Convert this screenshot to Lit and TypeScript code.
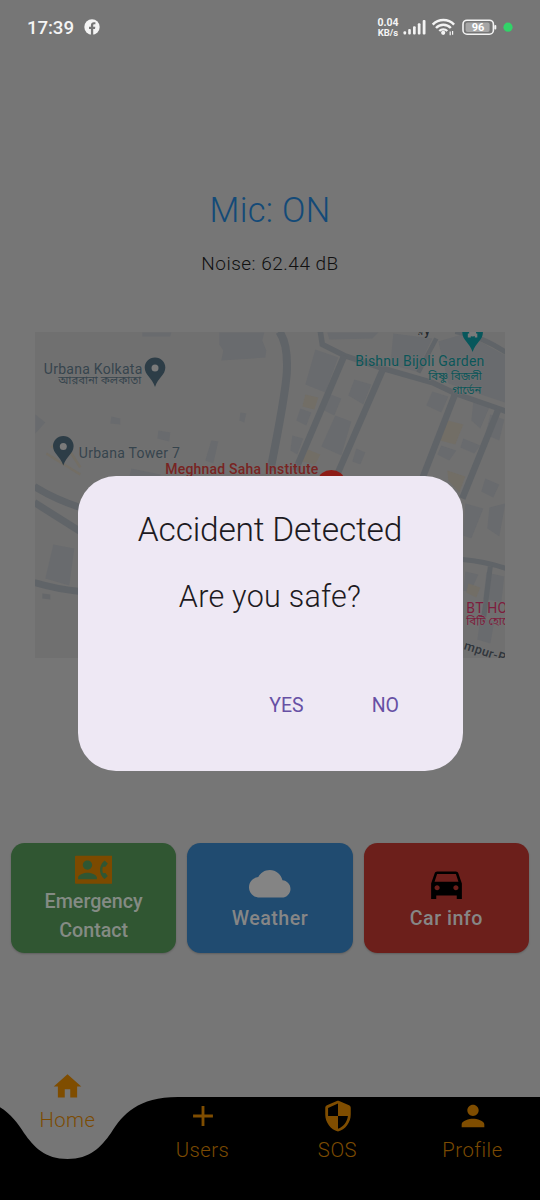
import { LitElement, html, css, svg } from "lit";
import { customElement } from "lit/decorators.js";

const ICONS: Record<string, string> = {
  contact:
    "M24 3.4Q24 3 23.5 3H.5Q0 3 0 3.5v17q0 .5.5.5h23q.5 0 .5-.5zM8 6c1.66 0 3 1.34 3 3s-1.34 3-3 3-3-1.34-3-3 1.34-3 3-3zm6 12H2v-1c0-2 4-3.1 6-3.1s6 1.1 6 3.1v1zm3.85-4h1.64L21 16l-1.99 1.99c-1.31-.98-2.28-2.38-2.73-3.99-.18-.64-.28-1.31-.28-2s.1-1.36.28-2c.45-1.62 1.42-3.01 2.73-3.99L21 8l-1.51 2h-1.64c-.22.63-.35 1.3-.35 2s.13 1.37.35 2z",
  cloud:
    "M19.35 10.04C18.67 6.59 15.64 4 12 4 9.11 4 6.6 5.64 5.35 8.04 2.34 8.36 0 10.91 0 14c0 3.31 2.69 6 6 6h13c2.76 0 5-2.24 5-5 0-2.64-2.05-4.78-4.65-4.96z",
  car: "M18.92 6.01C18.72 5.42 18.16 5 17.5 5h-11c-.66 0-1.21.42-1.42 1.01L3 12v9h3v-2h12v2h3v-9l-2.08-5.99zM6.5 16c-.83 0-1.5-.67-1.5-1.5S5.67 13 6.5 13s1.5.67 1.5 1.5S7.33 16 6.5 16zm11 0c-.83 0-1.5-.67-1.5-1.5s.67-1.5 1.5-1.5 1.5.67 1.5 1.5-.67 1.5-1.5 1.5zM5 11l1.5-4.5h11L19 11H5z",
  home: "M10 20v-6h4v6h5v-8h3L12 3 2 12h3v8z",
  plus: "M19 13h-6v6h-2v-6H5v-2h6V5h2v6h6v2z",
  shield:
    "M11.19 1.36l-7 3.11C3.47 4.79 3 5.51 3 6.3V11c0 5.55 3.84 10.74 9 12 5.16-1.26 9-6.45 9-12V6.3c0-.79-.47-1.51-1.19-1.83l-7-3.11c-.51-.23-1.11-.23-1.62 0zm.81 10.63h7c-.53 4.12-3.28 7.79-7 8.94V12H5V6.3l7-3.11v8.8z",
  person:
    "M12 12c2.21 0 4-1.79 4-4s-1.79-4-4-4-4 1.79-4 4 1.79 4 4 4zm0 2c-2.67 0-8 1.34-8 4v2h16v-2c0-2.66-5.33-4-8-4z",
};

const icon = (name: string, cls = "") =>
  html`<svg class="icon ${cls}" viewBox="0 0 24 24"><path fill-rule="evenodd" d=${ICONS[name]} /></svg>`;

@customElement("status-bar")
class StatusBar extends LitElement {
  static styles = css`
    :host { display: flex; align-items: center; height: 55px; padding: 0 27px; box-sizing: border-box; color: #f4f4f4; }
    .time { font-size: 18.700px; font-weight: 500; line-height: 22px; width: 57px; white-space: nowrap; letter-spacing: -0.100px; }
    .fb { width: 16px; height: 16px; margin-bottom: 1px; }
    .spacer { flex: 1; }
    .rate { font-size: 10.500px; line-height: 9.500px; font-weight: 700; text-align: center; width: 22px; white-space: nowrap; margin-right: 2px; }
    .rate div + div { font-size: 9.500px; }
    .glyphs { width: 112px; height: 24px; margin-bottom: 1px; }
  `;
  render() {
    return html`
      <div class="time">17:39</div>
      <svg class="fb" viewBox="0 0 16 16">
        <circle cx="8" cy="8" r="7.7" fill="#f4f4f4" />
        <path d="M6.9 16V10H5V7.8h1.9V6.2c0-2 1.2-3 2.9-3l1.6.1v1.9h-1c-.9 0-1.2.5-1.2 1.1v1.5h2.1L11 10H9.2v6z" fill="#767676" />
      </svg>
      <div class="spacer"></div>
      <div class="rate"><div>0.04</div><div>KB/s</div></div>
      <svg class="glyphs" viewBox="401 15 112 24">
        <g fill="#f4f4f4">
          <rect x="403.5" y="31.2" width="2.6" height="3.2" rx="1" />
          <rect x="408.2" y="29" width="2.6" height="5.4" rx="1" />
          <rect x="413" y="26.2" width="2.7" height="8.2" rx="1" />
          <rect x="417.8" y="23.2" width="2.7" height="11.2" rx="1" />
          <rect x="422.7" y="20" width="2.8" height="14.4" rx="1" />
          <circle cx="443.2" cy="32.8" r="2.1" />
          <rect x="494.3" y="25" width="2" height="4.6" rx="1" />
        </g>
        <g fill="none" stroke="#f4f4f4" stroke-width="2.5">
          <path d="M432.7 24.6a15 15 0 0 1 21.4 0" />
          <path d="M436 28a10.2 10.2 0 0 1 14.8 0" stroke-width="2.400" />
          <path d="M439.3 31a5.6 5.6 0 0 1 8 0" stroke-width="2.200" />
          <path d="M450.2 31.4v3.8M452.6 31v3.8" stroke-width="1.2" />
          <rect x="463" y="20.2" width="30.4" height="14" rx="4" stroke-width="1.6" />
        </g>
        <rect x="465.6" y="22.4" width="24" height="9.6" rx="2" fill="#a6a6a6" />
        <text x="478" y="31.2" text-anchor="middle" font-size="11" font-weight="700" fill="#fff">96</text>
        <circle cx="508" cy="27.2" r="4.6" fill="#31d368" />
      </svg>
    `;
  }
}

const ROADS: [string, number][] = [
  ["M279 331Q288 344 286.500 372Q285 395 270 470", 8],
  ["M320 331L322 344L344 355L383 368L432 382L455 393L498 408L506 411", 5.5],
  ["M344 355L295 470", 6.5],
  ["M383 368L336 476", 6.5],
  ["M455 393L422 478", 6.5],
  ["M498 409L462 498", 6.5],
  ["M418 372L436 338", 4.5],
  ["M455 331Q480 335 506 352", 5],
  ["M34 486Q55 499 80 507", 7],
  ["M34 502L80 531", 7],
  ["M34 582Q58 589 80 591", 7],
  ["M462 559Q485 561 506 568", 5],
  ["M490 566L483 620", 5],
];

const BLOCKS = [
  "219,332 264,332 262,340 266,350 265,357 221,360 223,350 219,344",
  "142,332 171,332 170,336 142,336",
  "35,414 45,422 35,433",
  "111,416 120,418 120,424 110,423",
  "158,430 170,432 169,441 157,438",
  "211,440 218,441 213,463 205,460",
  "240,412 246,413 244,422 239,420",
  "131,468 160,474 160,480 129,476",
  "327,332 378,332 372,338 329,339",
  "315,349 338,357 325,392 305,384",
  "354,379 371,384 363,404 348,395",
  "325,392 341,398 334,415 320,408",
  "335,415 351,421 341,455 321,446",
  "300,408 311,412 306,425 296,420",
  "292,435 303,438 297,454 290,450",
  "356,448 365,452 360,464 352,461",
  "393,333 432,338 416,371 390,364",
  "438,341 465,333 505,355 505,402 448,383",
  "432,391 448,396 441,412 426,405",
  "473,401 489,407 480,428 471,420",
  "441,445 456,450 449,460 437,454",
  "463,438 480,445 474,453 460,447",
  "490,414 504,419 499,440 485,434",
  "53,544 74,548 69,585 45,578",
  "465,503 483,508 471,538 463,535",
  "489,507 505,503 499,536 487,528",
  "485,478 499,484 493,497 481,491",
  "465,571 478,574 470,592 463,590",
  "486,572 504,576 501,602 483,598",
  "480,618 494,621 490,643 477,639",
];

const YELLOW = [
  "305,394 318,397 314,409 302,406",
  "305,448 320,454 315,464 302,461",
  "447,420 463,424 455,444 440,440",
  "447,470 465,476 459,492 448,480",
  "468,583 480,587 476,597 466,592",
];

const pin = (x: number, y: number, fill: string) =>
  svg`<g transform="translate(${x} ${y})">
    <path d="M0-15.500C-5.900-15.500-10.300-11-10.300-5.400-10.300 2-3 5 0 14 3 5 10.300 2 10.300-5.400 10.300-11 5.900-15.500 0-15.500z" fill=${fill} />
    <circle cy="-5" r="3.500" fill="#7a7a7a" /></g>`;

@customElement("area-map")
class AreaMap extends LitElement {
  static styles = css`
    :host { display: block; height: 326.500px; }
    .map { display: block; width: 100%; height: 100%; background: #707070; }
    .bn { font-family: "Noto Sans Bengali", "Noto Sans", sans-serif; }
  `;
  render() {
    return html`<svg class="map" viewBox="34.700 331.500 470.600 326.500">
      ${BLOCKS.map((p) => svg`<polygon points=${p} fill="#696b6e" />`)}
      ${YELLOW.map((p) => svg`<polygon points=${p} fill="#726e66" />`)}
      <path d="M51 447l7-6M46 453l34 21M66 445l14 22" fill="none" stroke="#736e65" stroke-width="2.500" />
      ${ROADS.map(([d, w]) => svg`<path d=${d} fill="none" stroke="#606468" stroke-width=${w} />`)}
      <path d="M51 600l-8-1v-5l8 1z" transform="translate(-1 -1)" fill="#65676a" />
      ${pin(154.7, 372.5, "#2d3d47")} ${pin(63, 451, "#2d3d47")}
      ${pin(472.3, 337.5, "#07575c")}
      <path d="M467.500 337v-4h2v-1h5v1h2.500v4h-2.500v-3h-4v3z" fill="#7a7a7a" />
      <ellipse cx="331" cy="479.500" rx="13" ry="10" fill="#8e1c17" />
      <g stroke="#747474" stroke-width="1.500" paint-order="stroke" stroke-opacity="0.400" font-size="14">
        <text x="43.500" y="373.500" textLength="98.500" fill="#36444d">Urbana Kolkata</text>
        <text class="bn" x="58" y="383.500" font-size="10.500" textLength="83" lengthAdjust="spacingAndGlyphs" fill="#36444d">আরবানা কলকাতা</text>
        <text x="78.500" y="457.500" textLength="101" fill="#36444d">Urbana Tower 7</text>
        <text x="165" y="473.500" textLength="153" font-weight="500" fill="#782422">Meghnad Saha Institute</text>
        <text x="355" y="365.500" textLength="129" fill="#0b5659">Bishnu Bijoli Garden</text>
        <text class="bn" x="428" y="379" font-size="10.500" textLength="53.500" lengthAdjust="spacingAndGlyphs" fill="#0b5659">বিষ্ণু বিজলী</text>
        <text class="bn" x="452" y="393.500" font-size="10.500" textLength="29" lengthAdjust="spacingAndGlyphs" fill="#0b5659">গার্ডেন</text>
        <text x="466" y="612.500" fill="#7d1d3d" letter-spacing="0.300">BT HO</text>
        <text class="bn" x="466" y="624.500" font-size="11.500" fill="#7d1d3d">বিটি হোটেল</text>
        <text x="417" y="334" font-size="12" font-weight="500" fill="#23282d">রy</text>
        <text transform="translate(463 648.500) rotate(18)" font-size="12.500" font-weight="500" letter-spacing="0.300" fill="#30363c">mpur-R</text>
      </g>
    </svg>`;
  }
}

@customElement("action-card")
class ActionCard extends LitElement {
  static properties = { label: {}, glyph: {}, tone: {} };
  declare label: string;
  declare glyph: string;
  declare tone: string;
  static styles = css`
    :host { display: block; }
    .card { height: 110px; border-radius: 13.500px; display: flex; flex-direction: column; align-items: center; justify-content: center; box-sizing: border-box; box-shadow: 0 1px 2px rgba(0, 0, 0, 0.2); color: #868686; }
    .green { background: #305632; color: #848b84; }
    .blue { background: #204b70; }
    .red { background: #6c1f1b; }
    .icon { width: 41px; height: 41px; display: block; margin: 1px 0; }
    .blue .icon { fill: #848484; width: 41.500px; height: 41.500px; margin: 0.500px 0 1px; }
    .green .icon { fill: #7c4a00; width: 37.500px; height: 37.500px; margin: -0.500px 0 0; }
    .red .icon { fill: #000; }
    .label { font-size: 19.700px; font-weight: 500; line-height: 28.500px; letter-spacing: 0.450px; text-align: center; max-width: 130px; }
    .green .label { letter-spacing: 0; }
  `;
  render() {
    return html`<div class="card ${this.tone}">${icon(this.glyph)}<div class="label">${this.label}</div></div>`;
  }
}

@customElement("bottom-nav")
class BottomNav extends LitElement {
  static styles = css`
    :host { display: grid; height: 140px; }
    .bar { grid-area: 1 / 1; width: 540px; height: 140px; display: block; }
    .items { grid-area: 1 / 1; display: grid; grid-template-columns: repeat(4, 1fr); z-index: 1; }
    .item { display: flex; flex-direction: column; align-items: center; padding-top: 39px; color: #7c4b02; }
    .item.active { padding-top: 10px; }
    .icon { width: 34px; height: 34px; fill: #7f4d00; display: block; }
    .active .icon { width: 33px; height: 33px; }
    .label { font-size: 20.300px; font-weight: 300; letter-spacing: 0.500px; line-height: 24px; margin-top: 5px; }
  `;
  render() {
    const items = [["home", "Home"], ["plus", "Users"], ["shield", "SOS"], ["person", "Profile"]];
    return html`
      <svg class="bar" viewBox="0 1060 540 140">
        <path d="M-43 1097C-3 1097 12 1114 24 1133C34 1147 45 1159 67.500 1159C90 1159 101 1147 111 1133C123 1114 138 1097 178 1097H540V1200H-43z" />
      </svg>
      <div class="items">
        ${items.map(([g, l], i) => html`<div class="item ${i === 0 ? "active" : ""}">${icon(g)}<div class="label">${l}</div></div>`)}
      </div>`;
  }
}

@customElement("alert-dialog")
class AlertDialog extends LitElement {
  static styles = css`
    :host { display: flex; flex-direction: column; box-sizing: border-box; width: 385px; height: 295px; border-radius: 38px; background: #eee8f4; color: #1d1a22; font-weight: 300; padding: 34px 40px 0; text-align: center; white-space: nowrap; }
    .title { font-size: 33.500px; line-height: 40px; letter-spacing: -0.200px; }
    .body { font-size: 30.500px; line-height: 36px; margin-top: 29px; letter-spacing: 0.250px; }
    .actions { display: flex; justify-content: flex-end; gap: 68px; padding-right: 23.500px; margin-top: 79px; font-size: 19.500px; line-height: 24px; font-weight: 400; color: #6750a4; }
  `;
  render() {
    return html`
      <div class="title">Accident Detected</div>
      <div class="body">Are you safe?</div>
      <div class="actions"><span>YES</span><span>NO</span></div>`;
  }
}

@customElement("app-root")
class AppRoot extends LitElement {
  static styles = css`
    :host { display: flex; flex-direction: column; position: relative; width: 540px; height: 1200px; overflow: hidden; background: #767676; font-family: Roboto, sans-serif; }
    .readings { text-align: center; padding-top: 134px; height: 276.500px; box-sizing: border-box; }
    .mic { font-size: 34.500px; line-height: 42px; font-weight: 300; color: #134a78; letter-spacing: 0.300px; }
    .noise { font-size: 19px; line-height: 24px; margin-top: 21px; font-weight: 300; color: #101010; letter-spacing: 0.500px; }
    .map { margin: 0 34.700px; }
    .cards { display: grid; grid-template-columns: repeat(3, 1fr); gap: 11px; padding: 185px 11px 0; flex: 1; }
    .dialog { position: absolute; left: 77.500px; top: 475.800px; z-index: 2; }
  `;
  render() {
    return html`
      <status-bar></status-bar>
      <div class="readings">
        <div class="mic">Mic: ON</div>
        <div class="noise">Noise: 62.44 dB</div>
      </div>
      <area-map class="map"></area-map>
      <div class="cards">
        <action-card label="Emergency Contact" glyph="contact" tone="green"></action-card>
        <action-card label="Weather" glyph="cloud" tone="blue"></action-card>
        <action-card label="Car info" glyph="car" tone="red"></action-card>
      </div>
      <bottom-nav></bottom-nav>
      <alert-dialog class="dialog"></alert-dialog>`;
  }
}
